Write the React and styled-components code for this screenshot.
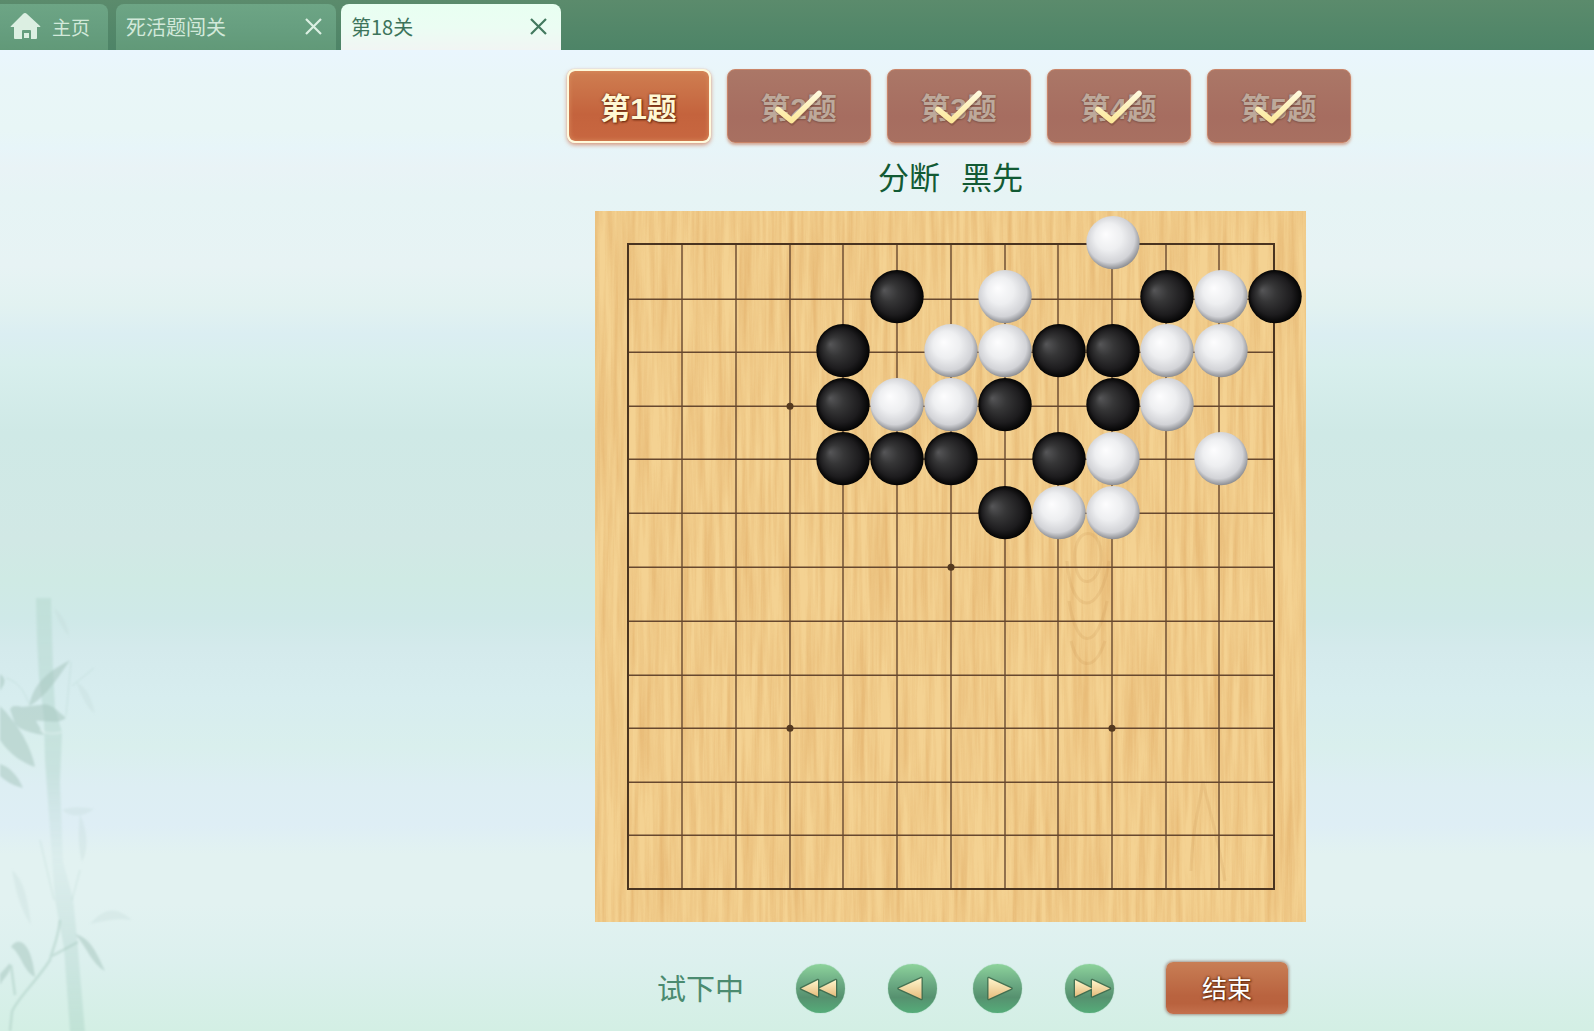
import React from "react";
import styled, { createGlobalStyle, css } from "styled-components";

const GlobalStyle = createGlobalStyle`
  *, *::before, *::after {
    box-sizing: border-box;
  }
  body {
    margin: 0;
    font-family: "Noto Sans CJK SC", sans-serif;
    font-weight: 400;
  }
  button {
    padding: 0;
    border: 0;
    background: none;
    font: inherit;
    cursor: pointer;
  }
`;

const Page = styled.div`
  display: flex;
  flex-direction: column;
  min-height: 100vh;
`;

/* ---------- tabs ---------- */

const TabBar = styled.nav`
  display: flex;
  align-items: flex-end;
  gap: 5px;
  height: 50px;
  background: linear-gradient(#5b8b6c, #4d8467);
`;

const tabSurface = css`
  display: flex;
  align-items: center;
  height: 46px;
  color: ${props => (props.$active ? "#3d745b" : "#d2e9da")};
  background: ${props =>
    props.$active
      ? "linear-gradient(#e8fff1, #ebfdf3 50%, #f1f5f3)"
      : "linear-gradient(#6da585, #679f80 50%, #619978)"};
`;

const HomeTab = styled.a`
  ${tabSurface}
  gap: 11px;
  width: 108px;
  margin-right: 3px;
  padding: 0 0 2px 10px;
  border-radius: 0 8px 0 0;
  font-size: 19px;
  text-decoration: none;
`;

const Tab = styled.div`
  ${tabSurface}
  justify-content: space-between;
  width: 220px;
  padding: 0 14px 2px 10px;
  border-radius: 8px 8px 0 0;
`;

const TabLink = styled.a`
  color: inherit;
  font-size: 20px;
  text-decoration: none;
`;

const CloseButton = styled.button`
  display: flex;
  color: ${props => (props.$active ? "#43795f" : "#dcf0e3")};
`;

/* ---------- page body ---------- */

const Body = styled.div`
  display: flex;
  flex: 1;
  background: linear-gradient(
    #eaf6fe 0%,
    #e9f6f8 3%,
    #e8f6f6 8%,
    #e7f5f9 10%,
    #e9f3f6 12%,
    #e6f4f5 15%,
    #e7f3f4 22%,
    #e2f2f1 26%,
    #dbeef2 29%,
    #d8efed 32%,
    #cfe9e6 39%,
    #d1e8e5 50%,
    #cfeae4 54%,
    #cfe9e8 58%,
    #d4eaec 61%,
    #d7edef 66%,
    #d9efed 71%,
    #ddeef3 75%,
    #deeef5 79%,
    #e2f2f1 82%,
    #e2f2f1 87%,
    #dcf0ee 93%,
    #d3efe4 100%
  );
`;

const Scenery = styled.aside`
  display: flex;
  flex: 0 1 307px;
  align-items: flex-end;
  overflow: hidden;
`;

const Main = styled.main`
  display: flex;
  flex: 1;
  flex-direction: column;
  align-items: center;
  padding-top: 19px;
`;

const Problems = styled.div`
  display: flex;
  padding-left: 16px;
  gap: 16px;
`;

const ProblemButton = styled.button`
  display: grid;
  place-items: center;
  width: 144px;
  height: 74px;
  border-radius: 8px;
  font: bold 30px "Liberation Sans", "Noto Sans CJK SC", sans-serif;
  ${props =>
    props.$done
      ? css`
          color: #bda99b;
          border: 1px solid #c98569;
          background: linear-gradient(#ab7767, #a66d60 65%, #a87061);
          box-shadow: 0 2px 3px rgba(190, 90, 50, 0.5);
          text-shadow: 0 0 2px #83564a, 0 1px 2px #83564a;
        `
      : css`
          color: #fff8d4;
          border: 2px solid #fffadc;
          background: linear-gradient(#cf7e51, #c4633d 62%, #c86740);
          background-clip: padding-box;
          box-shadow: 0 0 1px #e6a982, 0 2px 4px rgba(200, 90, 50, 0.6),
            inset 0 0 5px #d98e60;
          text-shadow: 0 0 3px #6d2c12, 1px 1px 2px #6d2c12;
        `}
  > * {
    grid-area: 1 / 1;
  }
`;

const Goal = styled.h1`
  margin: 0;
  padding-bottom: 2px;
  color: #125a34;
  font-size: 31px;
  font-weight: 400;
  line-height: 66px;
  white-space: pre;
`;

const BoardColumn = styled.div`
  width: 711px;
  max-width: 100%;
`;

const BoardSvg = styled.svg`
  display: block;
  width: 100%;
  height: auto;
`;

const Controls = styled.div`
  display: flex;
  align-items: center;
  gap: 52px;
  padding: 40px 0 16px 62px;
`;

const Status = styled.span`
  padding-bottom: 2px;
  color: #4b8b70;
  font-size: 29px;
  line-height: 50px;
`;

const Steps = styled.div`
  display: flex;
  gap: ${props => (props.$tight ? "36px" : "43px")};
`;

const StepButton = styled.button`
  display: flex;
  width: 49px;
  height: 49px;
  border-radius: 50%;
  background: linear-gradient(#8dd39b, #6fae86 35%, #56916f 68%, #55ac79);
  box-shadow: 0 0 1px #6cba8a;
`;

const EndButton = styled.button`
  width: 122px;
  height: 52px;
  padding-bottom: 2px;
  border-radius: 7px;
  color: #fff;
  font-size: 25px;
  font-weight: 400;
  background: linear-gradient(#c87e55, #b9633f 65%, #b9623e 80%, #c4714d);
  box-shadow: 0 0 3px 1px rgba(120, 75, 60, 0.55);
  text-shadow: 0 0 2px #6b2f10, 0 0 3px #6b2f10, 1px 1px 2px #6b2f10;
`;

/* ---------- icons ---------- */

function HomeIcon() {
  return (
    <svg width="31" height="28" viewBox="0 0 31 28" aria-hidden="true">
      <path
        d="M15 1q1 0 2 1l13 12q1 1 0 1h-3v11q0 1-1 1h-5v-8q0-1-1-1h-7q-1 0-1 1v8H5q-1 0-1-1V15H1q-1 0 0-1L13 2q1-1 2-1z"
        fill="#dcefe2"
      />
      <path d="M14 21h5v5h-5z" fill="#dcefe2" />
    </svg>
  );
}

function CloseIcon() {
  return (
    <svg width="17" height="18" viewBox="0 0 17 18" aria-hidden="true">
      <path
        d="M1 2l15 15M16 2L1 17"
        stroke="currentColor"
        strokeWidth="2.2"
      />
    </svg>
  );
}

function CheckIcon() {
  return (
    <svg width="142" height="72" viewBox="1 1 142 72" aria-hidden="true">
      <path
        d="M51.5 42L65 53.5 92.500 26.500"
        fill="none"
        stroke="#70402f"
        strokeOpacity=".4"
        strokeWidth="6"
        strokeLinecap="round"
        strokeLinejoin="round"
      />
      <path
        d="M51 40.500L64.500 51.500 92 24.500"
        fill="none"
        stroke="url(#checkFill)"
        strokeWidth="5.6"
        strokeLinecap="round"
        strokeLinejoin="round"
      />
    </svg>
  );
}

const STEP_SHAPES = {
  first: "M5 24.500L22 16V32.500z M23 24.500L40 16V32.500z",
  prev: "M10.500 24.500L33.500 14V35z",
  next: "M15.500 14V35L38.500 24.500z",
  last: "M10 16V32.500L27 24.500z M27 16V32.500L45 24.500z"
};

function StepIcon({ type }) {
  return (
    <svg width="49" height="49" viewBox="0 0 49 49" aria-hidden="true">
      <path
        d={STEP_SHAPES[type]}
        fill="url(#arrowFill)"
        stroke="#3c6447"
        strokeOpacity=".8"
        strokeWidth="2.6"
        strokeLinejoin="round"
        paintOrder="stroke"
      />
    </svg>
  );
}

const Defs = styled.svg`
  position: absolute;
`;

function SharedGradients() {
  return (
    <Defs width="0" height="0" aria-hidden="true">
      <defs>
        <linearGradient
          id="checkFill"
          gradientUnits="userSpaceOnUse"
          x1="0"
          y1="22"
          x2="0"
          y2="54"
        >
          <stop offset="0" stopColor="#fffbe2" />
          <stop offset="1" stopColor="#fde897" />
        </linearGradient>
        <linearGradient id="arrowFill" x1="0" y1="0" x2="0" y2="1">
          <stop offset="0" stopColor="#fff6cc" />
          <stop offset="1" stopColor="#e6bb7c" />
        </linearGradient>
      </defs>
    </Defs>
  );
}

function Bamboo() {
  return (
    <svg width="160" height="451" viewBox="0 0 160 451" aria-hidden="true">
      <defs>
        <filter id="mist" x="-10%" y="-10%" width="120%" height="120%">
          <feGaussianBlur stdDeviation="1" />
        </filter>
        <linearGradient id="stalk" x1="0" y1="0" x2="0" y2="1">
          <stop offset="0" stopColor="#b5d9cf" stopOpacity=".55" />
          <stop offset=".4" stopColor="#bbdad4" stopOpacity=".6" />
          <stop offset=".6" stopColor="#cbe2e2" stopOpacity=".3" />
          <stop offset=".78" stopColor="#bcdad5" stopOpacity=".45" />
          <stop offset="1" stopColor="#b5dacd" stopOpacity=".6" />
        </linearGradient>
      </defs>
      <g filter="url(#mist)">
        <path
          d="M36 18h15l2 70 2 40 7 24-2 50 3 80 10 36 4 40 8 94H70l-6-84-9-48-5-70-5-70-1-42-5-40-2-38z"
          fill="url(#stalk)"
        />
        <g fill="#a8c6c0" fillOpacity=".55">
          <path d="M70 80C52 90 34 100 29 126 44 118 54 104 70 80z" />
          <path d="M11 132C8 126 16 125 22 127l18-2c10-3 16 5 26 13-8 7-22 2-30 3l8 14c-14-2-28-6-30-14z" />
          <path d="M0 126C14 140 30 162 35 187 20 182 8 172 0 160z" />
          <path d="M0 184c10 3 18 12 23 24-12-3-18-8-23-12z" />
          <path d="M0 94q6 4 4 10l-4 7z" />
          <path d="M11 367c6-10 20-8 24 30-12-6-14-24-24-30z" />
          <path d="M10 383c2 10-6 14-10 22v-11z" />
          <path d="M75 354c16 4 22 20 30 37-14-8-18-24-30-37z" />
        </g>
        <g fill="#bdd9d3" fillOpacity=".28">
          <path d="M76 102c12 6 16 18 19 32-10-8-14-20-19-32z" />
          <path d="M12 290c12 10 16 30 19 55-12-18-16-38-19-55z" />
          <path d="M90 344c12-14 24-20 42-4-14-2-24 0-42 4z" />
          <path d="M54 28c8 6 14 16 15 28-8-8-12-18-15-28z" />
          <path d="M80 234c6 14 10 32 2 48-4-14-4-32-2-48z" />
          <path d="M62 230c10-4 20-3 32-1-10 8-22 9-32 1z" />
        </g>
        <g fill="none" stroke="#a9ccc2" strokeOpacity=".5">
          <path
            d="M60 340c-2 20-8 30-10 40-14 22-34 40-38 52l-2 19M52 376l26-14M11 385l4 30"
            strokeWidth="2.500"
          />
          <path
            d="M29 124C24 110 18 102 6 98M66 136l5-54M72 106l22-18M40 260l14 60M80 290l-8 30"
            strokeOpacity=".35"
          />
          <path d="M40 150q10 6 22 2" stroke="#e4f3f1" strokeWidth="2" />
        </g>
      </g>
    </svg>
  );
}

/* ---------- board ---------- */

const COLS = [33, 87, 141, 195, 248, 302, 356, 410, 463, 517, 571, 624, 679];
const ROWS = [33, 88, 141, 195, 248, 302, 356, 410, 464, 517, 571, 624, 678];
const STARS = [[3, 3], [6, 6], [3, 9], [9, 9]];

// [column, row] counted from the top left corner
const BLACK = [
  [5, 1], [10, 1], [12, 1],
  [4, 2], [8, 2], [9, 2],
  [4, 3], [7, 3], [9, 3],
  [4, 4], [5, 4], [6, 4], [8, 4],
  [7, 5]
];
const WHITE = [
  [9, 0],
  [7, 1], [11, 1],
  [6, 2], [7, 2], [10, 2], [11, 2],
  [5, 3], [6, 3], [10, 3],
  [9, 4], [11, 4],
  [8, 5], [9, 5]
];

function Stone({ at, color }) {
  const [col, row] = at;
  return (
    <circle cx={32 + col * 54} cy={31.6 + row * 54} r="26.7" fill={`url(#${color})`} />
  );
}

function Board() {
  return (
    <BoardSvg viewBox="0 0 711 711" role="img" aria-label="棋盘">
      <defs>
        <radialGradient id="black" cx=".5" cy=".5" r=".5" fx=".26" fy=".38">
          <stop offset="0" stopColor="#565658" />
          <stop offset=".35" stopColor="#363637" />
          <stop offset=".75" stopColor="#1d1c1e" />
          <stop offset="1" stopColor="#030303" />
        </radialGradient>
        <radialGradient id="white" cx=".48" cy=".45" r=".56" fx=".36" fy=".34">
          <stop offset="0" stopColor="#fdfdfe" />
          <stop offset=".45" stopColor="#eeeff1" />
          <stop offset=".8" stopColor="#d2d3d7" />
          <stop offset="1" stopColor="#85878c" />
        </radialGradient>
        <filter
          id="grain"
          x="0"
          y="0"
          width="100%"
          height="100%"
          colorInterpolationFilters="sRGB"
        >
          <feTurbulence
            type="fractalNoise"
            baseFrequency="0.17 0.007"
            numOctaves="4"
            seed="11"
          />
          <feColorMatrix values="0 0 0 0 .86  0 0 0 0 .64  0 0 0 0 .36  1.4 0 0 0 -.42" />
        </filter>
      </defs>
      <rect width="711" height="711" fill="#f4d292" />
      <rect width="711" height="711" filter="url(#grain)" opacity=".62" />
      <g fill="none" stroke="#c58f50" strokeOpacity=".17" strokeWidth="3">
        <path d="M480 345c0-30 26-30 26 0s-26 38-26 0z" />
        <path d="M472 350c4 56 34 56 42 0M474 390c8 50 28 50 38 0M476 430c8 30 24 30 34 0" />
        <path d="M596 660c2-50 8-60 12-90 6 30 14 50 22 100" />
      </g>
      <g stroke="#67482f" strokeWidth="1.400">
        {COLS.slice(1, -1).map(x => (
          <line key={x} x1={x} x2={x} y1="33" y2="678" />
        ))}
        {ROWS.slice(1, -1).map(y => (
          <line key={y} x1="33" x2="679" y1={y + 0.2} y2={y + 0.2} />
        ))}
      </g>
      <rect
        x="33"
        y="33"
        width="646"
        height="645"
        fill="none"
        stroke="#4a3420"
        strokeWidth="2"
      />
      {STARS.map(([col, row]) => (
        <circle
          key={`${col}-${row}`}
          cx={COLS[col]}
          cy={ROWS[row] + 0.2}
          r="3.5"
          fill="#54391f"
        />
      ))}
      {BLACK.map(at => (
        <Stone key={at.join()} at={at} color="black" />
      ))}
      {WHITE.map(at => (
        <Stone key={at.join()} at={at} color="white" />
      ))}
    </BoardSvg>
  );
}

const PROBLEMS = [
  { id: 1, done: false },
  { id: 2, done: true },
  { id: 3, done: true },
  { id: 4, done: true },
  { id: 5, done: true }
];

export default function App() {
  return (
    <Page>
      <GlobalStyle />
      <SharedGradients />
      <TabBar>
        <HomeTab href="#home">
          <HomeIcon />
          主页
        </HomeTab>
        <Tab>
          <TabLink href="#problems">死活题闯关</TabLink>
          <CloseButton type="button" aria-label="关闭 死活题闯关">
            <CloseIcon />
          </CloseButton>
        </Tab>
        <Tab $active>
          <TabLink href="#level">第18关</TabLink>
          <CloseButton type="button" aria-label="关闭 第18关" $active>
            <CloseIcon />
          </CloseButton>
        </Tab>
      </TabBar>
      <Body>
        <Scenery>
          <Bamboo />
        </Scenery>
        <Main>
          <Problems>
            {PROBLEMS.map(({ id, done }) => (
              <ProblemButton key={id} type="button" $done={done}>
                <span>第{id}题</span>
                {done && <CheckIcon />}
              </ProblemButton>
            ))}
          </Problems>
          <Goal>{"分断\u00a0\u00a0\u00a0黑先"}</Goal>
          <BoardColumn>
            <Board />
            <Controls>
              <Status>试下中</Status>
              <Steps>
                <StepButton type="button" aria-label="第一手">
                  <StepIcon type="first" />
                </StepButton>
                <Steps $tight>
                  <StepButton type="button" aria-label="上一手">
                    <StepIcon type="prev" />
                  </StepButton>
                  <StepButton type="button" aria-label="下一手">
                    <StepIcon type="next" />
                  </StepButton>
                </Steps>
                <StepButton type="button" aria-label="最后一手">
                  <StepIcon type="last" />
                </StepButton>
              </Steps>
              <EndButton type="button">结束</EndButton>
            </Controls>
          </BoardColumn>
        </Main>
      </Body>
    </Page>
  );
}
